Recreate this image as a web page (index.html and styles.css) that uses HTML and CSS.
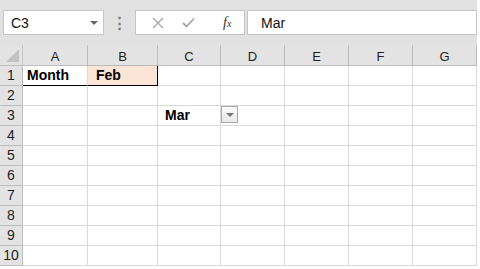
FILE: index.html
```html
<!DOCTYPE html>
<html lang="en">
<head>
    <meta charset="UTF-8">
    <title>Sheet</title>
    <link rel="stylesheet" href="styles.css">
</head>
<body>
    <div class="topbar">
        <div class="namebox">
            <span>C3</span>
            <span class="arrow"></span>
        </div>
        <div class="dots">&#8942;</div>
        <div class="fxbox">
            <svg width="12" height="12" viewBox="0 0 12 12"><path d="M1 1 L11 11 M11 1 L1 11" stroke="#a6a6a6" stroke-width="1.3" fill="none"/></svg>
            <svg width="13" height="11" viewBox="0 0 13 11"><path d="M1 6 L4.5 9.5 L12 1.5" stroke="#a6a6a6" stroke-width="1.8" fill="none"/></svg>
            <span class="fx">f<sub>x</sub></span>
        </div>
        <div class="formula">Mar</div>
    </div>
    <div class="sheet">
        <div class="corner"><span class="tri"></span></div>
        <div class="colhead">A</div>
        <div class="colhead">B</div>
        <div class="colhead">C</div>
        <div class="colhead">D</div>
        <div class="colhead">E</div>
        <div class="colhead">F</div>
        <div class="colhead">G</div>

        <div class="rowhead">1</div>
        <div class="cell bold under">Month</div>
        <div class="cell bold under filled">Feb</div>
        <div class="cell"></div><div class="cell"></div><div class="cell"></div><div class="cell"></div><div class="cell"></div>

        <div class="rowhead">2</div>
        <div class="cell"></div><div class="cell"></div><div class="cell"></div><div class="cell"></div><div class="cell"></div><div class="cell"></div><div class="cell"></div>

        <div class="rowhead">3</div>
        <div class="cell"></div><div class="cell"></div>
        <div class="cell bold indent">Mar</div>
        <div class="cell dropcell"><span class="dropbtn"></span></div>
        <div class="cell"></div><div class="cell"></div><div class="cell"></div>

        <div class="rowhead">4</div>
        <div class="cell"></div><div class="cell"></div><div class="cell"></div><div class="cell"></div><div class="cell"></div><div class="cell"></div><div class="cell"></div>
        <div class="rowhead">5</div>
        <div class="cell"></div><div class="cell"></div><div class="cell"></div><div class="cell"></div><div class="cell"></div><div class="cell"></div><div class="cell"></div>
        <div class="rowhead">6</div>
        <div class="cell"></div><div class="cell"></div><div class="cell"></div><div class="cell"></div><div class="cell"></div><div class="cell"></div><div class="cell"></div>
        <div class="rowhead">7</div>
        <div class="cell"></div><div class="cell"></div><div class="cell"></div><div class="cell"></div><div class="cell"></div><div class="cell"></div><div class="cell"></div>
        <div class="rowhead">8</div>
        <div class="cell"></div><div class="cell"></div><div class="cell"></div><div class="cell"></div><div class="cell"></div><div class="cell"></div><div class="cell"></div>
        <div class="rowhead">9</div>
        <div class="cell"></div><div class="cell"></div><div class="cell"></div><div class="cell"></div><div class="cell"></div><div class="cell"></div><div class="cell"></div>
        <div class="rowhead">10</div>
        <div class="cell"></div><div class="cell"></div><div class="cell"></div><div class="cell"></div><div class="cell"></div><div class="cell"></div><div class="cell"></div>
    </div>
</body>
</html>
```

FILE: styles.css
```css
body { margin: 0; background: #fff; font-family: "Liberation Sans", Arial, sans-serif; width: 480px; height: 269px; overflow: hidden; }

.topbar { display: flex; align-items: flex-start; height: 45px; box-sizing: border-box; padding: 10px 0 0 3px; background: #e1e1e1; width: 477px; }
.namebox { width: 101px; height: 25px; box-sizing: border-box; border: 1px solid #c6c6c6; background: #fff; display: flex; align-items: center; justify-content: space-between; padding: 0 5px 0 7px; font-size: 14px; color: #111; }
.arrow { width: 0; height: 0; border-left: 4px solid transparent; border-right: 4px solid transparent; border-top: 4px solid #666; }
.dots { width: 31px; height: 25px; display: flex; align-items: center; justify-content: center; color: #7a7a7a; font-size: 15px; font-weight: bold; }
.fxbox { width: 110px; height: 25px; box-sizing: border-box; border: 1px solid #c6c6c6; background: #fff; display: flex; align-items: center; padding: 0 0 0 16px; gap: 18px; }
.fx { font-family: "Liberation Serif", serif; font-style: italic; font-size: 14px; color: #333; margin-left: 10px; }
.fx sub { font-size: 10px; vertical-align: 0; }
.formula { margin-left: 2px; width: 230px; height: 25px; box-sizing: border-box; border: 1px solid #c6c6c6; background: #fff; padding-left: 13px; display: flex; align-items: center; font-size: 14px; color: #111; }

.sheet { display: grid; grid-template-columns: 23px 65px 70px 63px 64px 64px 64px 64px; grid-template-rows: 21px repeat(10, 20px); width: 477px; }
.corner, .colhead, .rowhead { background: #e3e3e3; box-sizing: border-box; border-right: 1px solid #bcbcbc; border-bottom: 1px solid #bcbcbc; color: #1e1e1e; font-size: 13px; }
.corner { position: relative; border-right-color: #c8c8c8; }
.tri { position: absolute; right: 3px; bottom: 3px; width: 0; height: 0; border-left: 13px solid transparent; border-bottom: 13px solid #c3c3c3; }
.colhead { display: flex; align-items: center; justify-content: center; padding-top: 2px; }
.rowhead { display: flex; align-items: flex-end; justify-content: center; padding-bottom: 2px; font-size: 14px; }
.cell { box-sizing: border-box; border-right: 1px solid #d9d9d9; border-bottom: 1px solid #d9d9d9; font-size: 14px; display: flex; align-items: flex-end; padding: 0 0 2px 4px; color: #000; }
.bold { font-weight: bold; }
.indent { padding-left: 7px; }
.under { border-bottom: 1px solid #000; }
.filled { background: #fce4d6; border-right: 1px solid #000; padding-left: 8px; }
.dropcell { position: relative; }
.dropbtn { position: absolute; left: 0; top: 0; width: 17px; height: 17px; box-sizing: border-box; border: 1px solid #a9a9a9; background: linear-gradient(#fafafa, #e9e9e9); }
.dropbtn::after { content: ""; position: absolute; left: 4px; top: 6px; border-left: 4px solid transparent; border-right: 4px solid transparent; border-top: 4px solid #777; }
```
